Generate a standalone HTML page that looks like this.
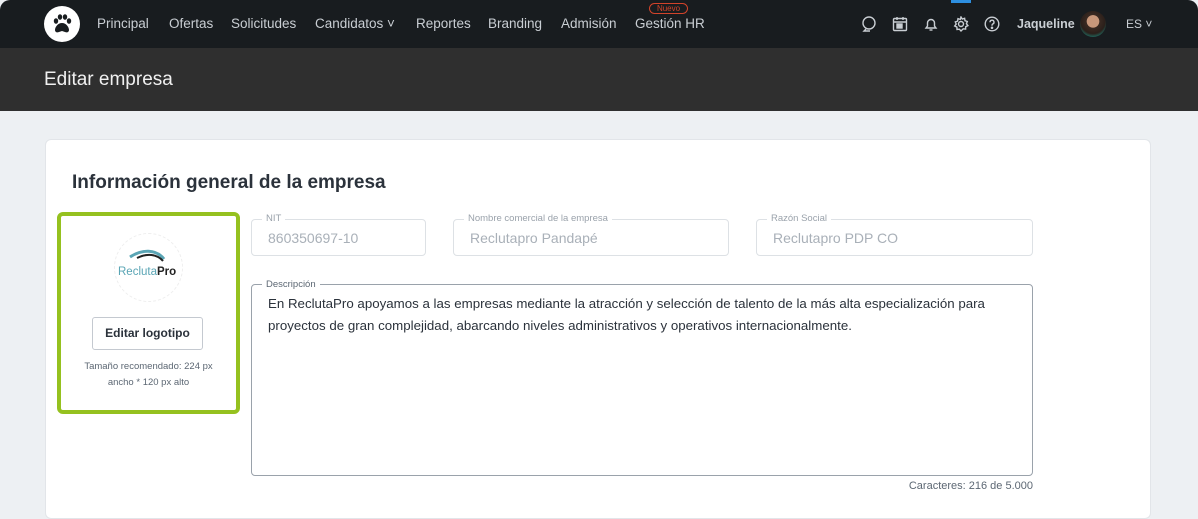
<!DOCTYPE html>
<html><head><meta charset="utf-8"><style>
*{box-sizing:border-box;margin:0;padding:0}
body{width:1198px;height:514px;overflow:hidden;background:#edf0f3;font-family:"Liberation Sans",sans-serif;position:relative}
.nav{position:absolute;left:0;top:0;width:1198px;height:48px;background:#181c1f;border-radius:10px 10px 0 0}
.nav .logo{position:absolute;left:44px;top:6px;width:36px;height:36px;border-radius:50%;background:#fff}
.nav a{position:absolute;top:16px;color:#c9ced3;font-size:13.5px;text-decoration:none}
.badge{position:absolute;left:649px;top:3px;width:39px;height:11px;border:1px solid #d2432a;border-radius:6px;color:#d2432a;font-size:8px;text-align:center;line-height:9px}
.hdr{position:absolute;left:0;top:48px;width:1198px;height:63px;background:#2f2f2f}
.hdr h1{position:absolute;left:44px;top:21px;color:#f0f0f0;font-weight:normal;font-size:19px}
.card{position:absolute;left:45px;top:139px;width:1106px;height:380px;background:#fff;border:1px solid #e2e5e9;border-radius:6px}
.title{position:absolute;left:72px;top:172px;font-size:19px;color:#2b323b;font-weight:bold}
.logobox{position:absolute;left:57px;top:212px;width:183px;height:202px;border:4px solid #95c11f;border-radius:6px}
.circ{position:absolute;left:53px;top:17px;width:69px;height:69px;border:1px dashed #eee;border-radius:50%}
.btn{position:absolute;left:31px;top:101px;width:111px;height:33px;border:1px solid #c4c9d0;border-radius:3px;font-size:12px;font-weight:bold;color:#2b323b;text-align:center;line-height:31px}
.rec{position:absolute;left:0;top:143px;width:175px;text-align:center;font-size:9.5px;color:#5c6773;line-height:16px}
.fld{position:absolute;border:1px solid #dde1e5;border-radius:4px;height:37px;color:#a9b0b8;font-size:14px;padding:10px 0 0 16px}
.lbl{position:absolute;top:-7px;left:10px;background:#fff;padding:0 4px;font-size:9.5px;color:#9aa2ab;line-height:12px}
.desc{position:absolute;left:251px;top:284px;width:782px;height:192px;border:1px solid #9aa2ab;border-radius:4px;padding:8px 16px;font-size:13.3px;line-height:22px;color:#2b323b}
.desc .lbl{color:#5c6773;top:-6px}
.cnt{position:absolute;left:880px;top:480px;width:153px;text-align:right;font-size:11px;color:#5c6773}
.ic{position:absolute;top:16px}
</style></head><body>
<div class="nav">
<div class="logo"><svg width="36" height="36" viewBox="0 0 36 36"><g fill="#181c1f"><ellipse cx="12" cy="15" rx="2.2" ry="2.8"/><ellipse cx="16" cy="11" rx="2.2" ry="2.8"/><ellipse cx="21" cy="11" rx="2.2" ry="2.8"/><ellipse cx="25" cy="15" rx="2.2" ry="2.8"/><path d="M18 17c-4 0-7 4-7 7 0 2 2 3 4 2l3-1 3 1c2 1 4 0 4-2 0-3-3-7-7-7z"/></g></svg></div>
<a style="left:97px">Principal</a><a style="left:169px">Ofertas</a><a style="left:231px">Solicitudes</a><a style="left:315px">Candidatos ˅</a><a style="left:416px">Reportes</a><a style="left:488px">Branding</a><a style="left:561px">Admisión</a><a style="left:635px">Gestión HR</a>
<div class="badge">Nuevo</div>
<div style="position:absolute;left:951px;top:0;width:20px;height:3px;background:#2d8fe0"></div>
<svg class="ic" style="left:861px" width="16" height="16" viewBox="0 0 16 16" fill="none" stroke="#c9ced3" stroke-width="1.4"><circle cx="8" cy="7" r="6"/><path d="M5 13l-2 2h6"/></svg>
<svg class="ic" style="left:892px" width="16" height="16" viewBox="0 0 16 16" fill="none" stroke="#c9ced3" stroke-width="1.4"><rect x="1.5" y="2.5" width="13" height="12" rx="1"/><path d="M5 1v3M11 1v3M1.5 6h13"/><rect x="5" y="8" width="5" height="4" fill="#c9ced3"/></svg>
<svg class="ic" style="left:923px" width="16" height="16" viewBox="0 0 16 16" fill="none" stroke="#c9ced3" stroke-width="1.4"><path d="M3 12h10l-1.5-2V7a3.5 3.5 0 0 0-7 0v3z"/><path d="M6.5 14h3"/></svg>
<svg class="ic" style="left:953px" width="16" height="16" viewBox="0 0 16 16" fill="none" stroke="#c9ced3" stroke-width="1.4"><circle cx="8" cy="8" r="2.5"/><path d="M8 1l1.3 2 2.3-.7.4 2.4 2.3.8-.9 2.2 1.5 1.9-2.2 1.1-.1 2.4-2.4-.3L8 15l-1.6-1.8-2.4.3-.1-2.4-2.2-1.1 1.5-1.9-.9-2.2 2.3-.8.4-2.4 2.3.7z"/></svg>
<svg class="ic" style="left:984px" width="16" height="16" viewBox="0 0 16 16" fill="none" stroke="#c9ced3" stroke-width="1.4"><circle cx="8" cy="8" r="6.8"/><path d="M6 6.2a2 2 0 1 1 2.6 1.9c-.6.3-.6.8-.6 1.6"/><circle cx="8" cy="11.8" r=".6" fill="#c9ced3"/></svg>
<a style="left:1017px;font-weight:bold;font-size:12.5px;top:17px">Jaqueline</a>
<div style="position:absolute;left:1080px;top:11px;width:26px;height:26px;border-radius:50%;background:radial-gradient(circle at 50% 40%,#c8977a 30%,#3a2a22 32%,#2a1f1a 60%,#1f6e63 80%)"></div>
<a style="left:1126px;font-size:12px;top:17px">ES ˅</a>
</div>
<div class="hdr"><h1>Editar empresa</h1></div>
<div class="card"></div>
<div class="title">Información general de la empresa</div>
<div class="logobox">
<div class="circ"><svg width="69" height="69" viewBox="0 0 69 69"><path d="M15 23c12-8 26-8 34 2" stroke="#5aa5b5" stroke-width="3" fill="none"/><path d="M22 24c10-5 20-4 26 3" stroke="#222" stroke-width="2" fill="none"/><text x="3" y="41" font-size="11.5" fill="#5aa5b5" font-family="Liberation Sans">Recluta<tspan fill="#222" font-weight="bold">Pro</tspan></text></svg></div>
<div class="btn">Editar logotipo</div>
<div class="rec">Tamaño recomendado: 224 px<br>ancho * 120 px alto</div>
</div>
<div class="fld" style="left:251px;top:219px;width:175px"><span class="lbl">NIT</span>860350697-10</div>
<div class="fld" style="left:453px;top:219px;width:276px"><span class="lbl">Nombre comercial de la empresa</span>Reclutapro Pandapé</div>
<div class="fld" style="left:756px;top:219px;width:277px"><span class="lbl">Razón Social</span>Reclutapro PDP CO</div>
<div class="desc"><span class="lbl">Descripción</span>En ReclutaPro apoyamos a las empresas mediante la atracción y selección de talento de la más alta especialización para proyectos de gran complejidad, abarcando niveles administrativos y operativos internacionalmente.</div>
<div class="cnt">Caracteres: 216 de 5.000</div>
</body></html>
